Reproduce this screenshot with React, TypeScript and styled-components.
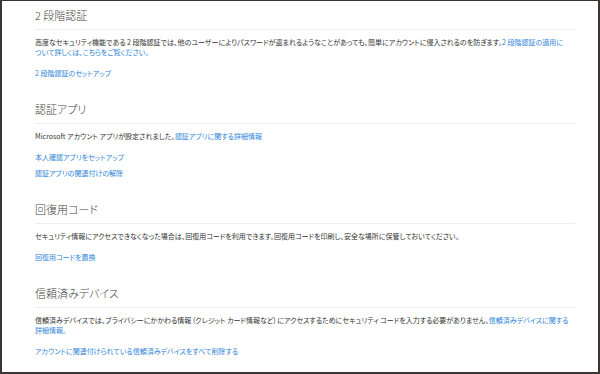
import React from "react";
import styled, { createGlobalStyle } from "styled-components";

const GlobalStyle = createGlobalStyle`
  html, body {
    margin: 0;
    padding: 0;
    background: #ffffff;
  }
  body {
    font-family: "Noto Sans CJK JP", "Noto Sans", sans-serif;
    color: #333333;
  }
`;

const Frame = styled.div`
  box-sizing: border-box;
  width: 600px;
  height: 374px;
  border-style: solid;
  border-color: #3a3636;
  border-width: 1px 2px 2px 2px;
  background: #ffffff;
  padding: 6px 0 0 33px;
  overflow: hidden;
`;

const Content = styled.div`
  width: 540px;
`;

const Section = styled.section`
  & + & {
    margin-top: 23px;
  }
`;

const Title = styled.h2`
  margin: 0;
  padding-bottom: 6px;
  border-bottom: 1px solid #eeeeee;
  font-size: 11px;
  line-height: 16px;
  font-weight: 300;
  font-feature-settings: "palt";
  color: #444444;
`;

const Paragraph = styled.p`
  margin: 7px 0 0;
  font-size: 7px;
  line-height: 10px;
  font-feature-settings: "palt";
  color: #333333;
`;

const Links = styled.div`
  display: flex;
  flex-direction: column;
  gap: 6px;
  margin-top: 11px;
`;

const Link = styled.a`
  color: #2f86d8;
  text-decoration: none;
  font-size: 7px;
  line-height: 10px;
  font-feature-settings: "palt";
  cursor: pointer;
`;

export default function App() {
  return (
    <>
      <GlobalStyle />
      <Frame>
        <Content>
          <Section>
            <Title>2 段階認証</Title>
            <Paragraph>
              高度なセキュリティ機能である 2 段階認証では、他のユーザーによりパスワードが盗まれるようなことがあっても、簡単にアカウントに侵入されるのを防ぎます。
              <Link>2 段階認証の適用に</Link>
              <br />
              <Link>ついて詳しくは、こちらをご覧ください。</Link>
            </Paragraph>
            <Links>
              <Link>2 段階認証のセットアップ</Link>
            </Links>
          </Section>
          <Section>
            <Title>認証アプリ</Title>
            <Paragraph>
              Microsoft アカウント アプリが設定されました。<Link>認証アプリに関する詳細情報</Link>
            </Paragraph>
            <Links>
              <Link>本人確認アプリをセットアップ</Link>
              <Link>認証アプリの関連付けの解除</Link>
            </Links>
          </Section>
          <Section>
            <Title>回復用コード</Title>
            <Paragraph>
              セキュリティ情報にアクセスできなくなった場合は、回復用コードを利用できます。回復用コードを印刷し、安全な場所に保管しておいてください。
            </Paragraph>
            <Links>
              <Link>回復用コードを置換</Link>
            </Links>
          </Section>
          <Section>
            <Title>信頼済みデバイス</Title>
            <Paragraph>
              信頼済みデバイスでは、プライバシーにかかわる情報 (クレジット カード情報など) にアクセスするためにセキュリティ コードを入力する必要がありません。
              <Link>信頼済みデバイスに関する</Link>
              <br />
              <Link>詳細情報。</Link>
            </Paragraph>
            <Links>
              <Link>アカウントに関連付けられている信頼済みデバイスをすべて削除する</Link>
            </Links>
          </Section>
        </Content>
      </Frame>
    </>
  );
}
